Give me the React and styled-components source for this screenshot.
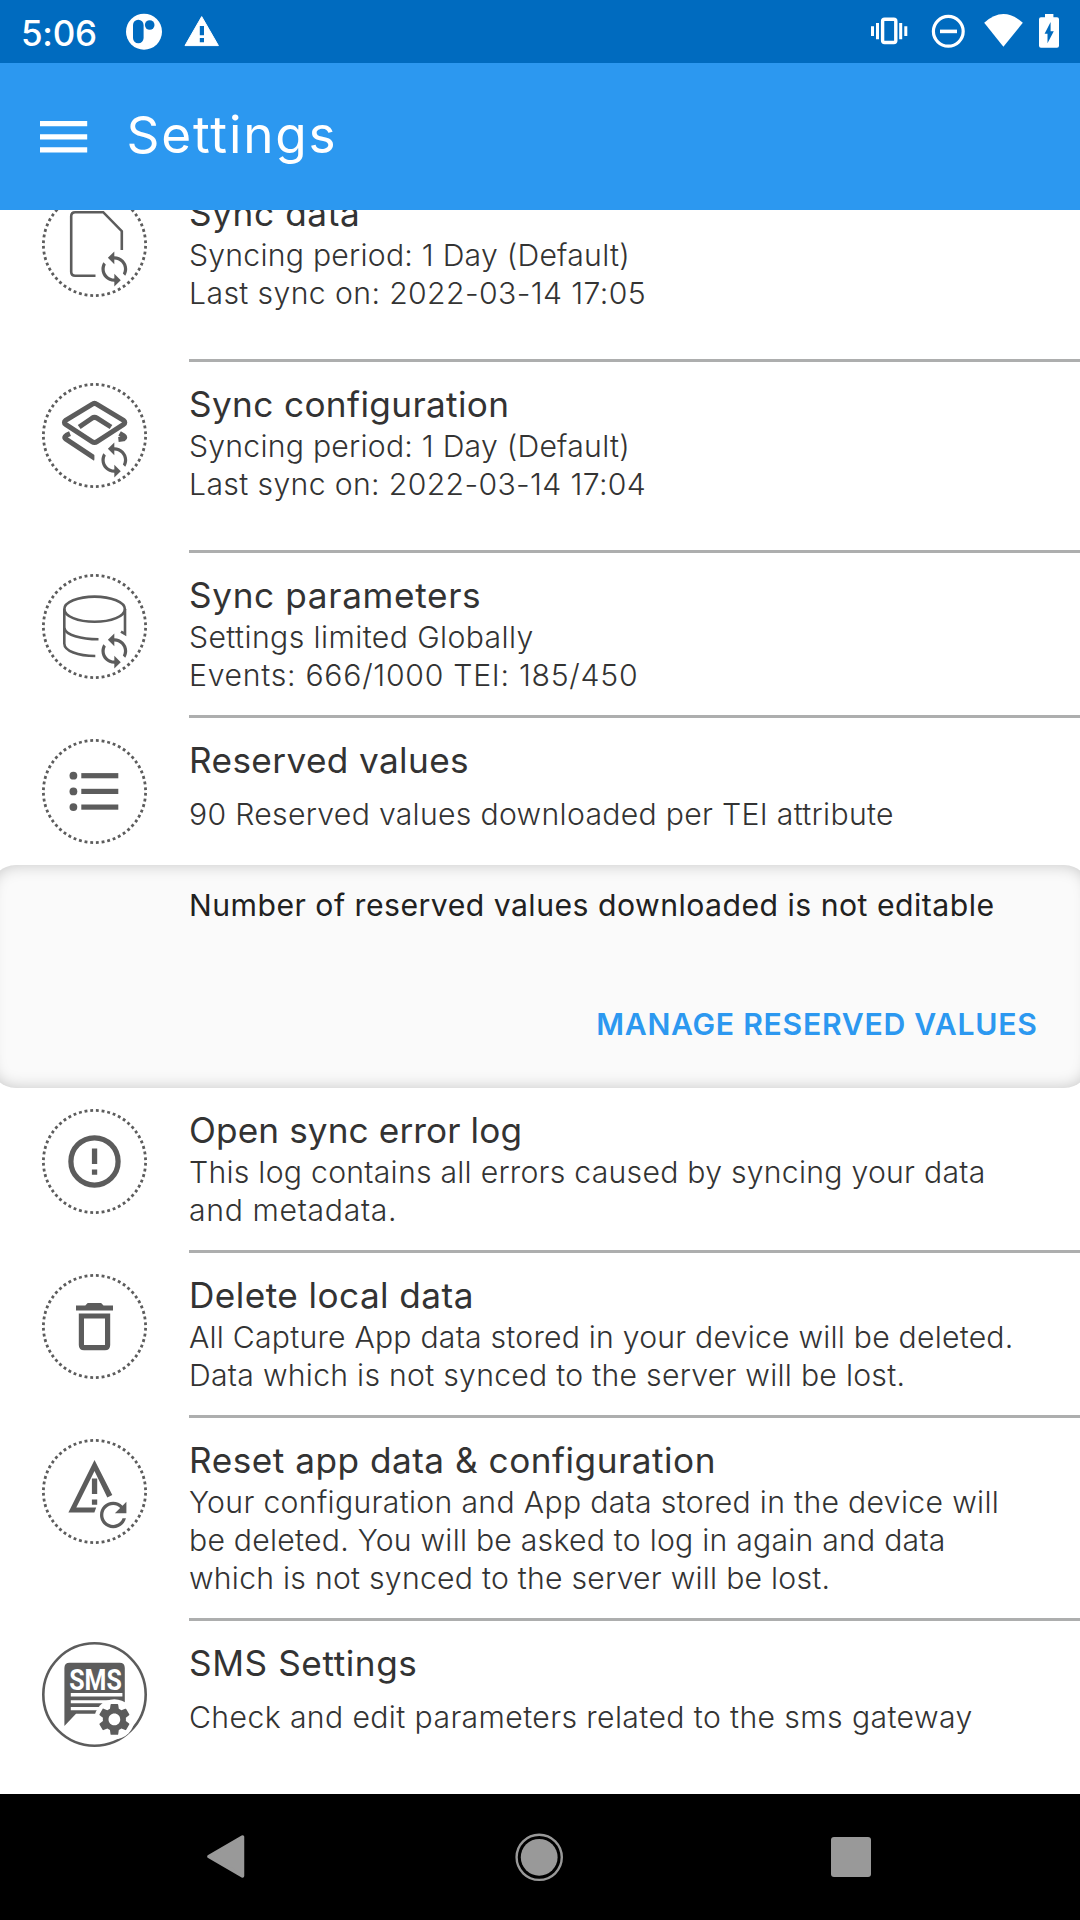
import React from "react";
import styled, { createGlobalStyle } from "styled-components";

const INK = "#5c5c5c";

const GlobalStyle = createGlobalStyle`
  *, *::before, *::after { box-sizing: border-box; }
  body { margin: 0; background: #fff; }
  svg { display: block; flex: none; }
`;

const Screen = styled.div`
  display: flex;
  flex-direction: column;
  width: 1080px;
  height: 1920px;
  overflow: hidden;
  background: #fff;
  font-family: Inter, Roboto, "Liberation Sans", sans-serif;
`;

const StatusBar = styled.header`
  display: flex;
  flex: none;
  align-items: stretch;
  justify-content: space-between;
  height: 63px;
  padding: 0 21px;
  background: #006bbf;
  color: #fff;
`;

const StatusGroup = styled.div`
  display: flex;
`;

const Clock = styled.time`
  width: 105px;
  font-size: 35px;
  font-weight: 500;
  line-height: 67px;
  letter-spacing: -0.3px;
`;

const StatusIcon = styled.svg`
  height: 63px;
  margin-right: ${(p) => p.$gap || 0}px;
`;

const AppBar = styled.div`
  display: flex;
  flex: none;
  align-items: center;
  height: 147px;
  padding-left: 40px;
  background: #2c98f0;
  color: #fff;
`;

const MenuButton = styled.button`
  display: flex;
  padding: 0;
  border: 0;
  background: none;
  margin-right: 38.6px;
`;

const AppTitle = styled.h1`
  margin: 0;
  padding-bottom: 5px;
  font-size: 51.3px;
  font-weight: 400;
  line-height: 62px;
  letter-spacing: 1.8px;
`;

const Content = styled.main`
  flex: 1;
  min-height: 0;
  overflow: hidden;
`;

const List = styled.div`
  display: flex;
  flex-direction: column;
  margin-top: -39px;
`;

const Row = styled.section`
  display: flex;
  flex: none;
  height: ${(p) => p.$height}px;
  padding-left: 42px;
`;

const RowIcon = styled.svg`
  width: 105px;
  height: 105px;
  margin: 21px 42px 0 0;
  overflow: visible;
`;

const RowBody = styled.div`
  flex: 1;
  padding-top: 21px;
  border-bottom: ${(p) => (p.$divided ? "3px solid #adaeae" : "0")};
`;

const RowTitle = styled.h2`
  margin: 0;
  color: #333;
  font-size: 35.2px;
  font-weight: 400;
  line-height: 42px;
  letter-spacing: ${(p) => p.$track}px;
  white-space: nowrap;
`;

const Description = styled.div`
  padding-top: ${(p) => (p.$spaced ? 14 : 2)}px;
`;

const Line = styled.p`
  margin: 0;
  color: #333;
  font-size: 30.2px;
  font-weight: 300;
  line-height: 38px;
  letter-spacing: ${(p) => p.$track}px;
  white-space: nowrap;
`;

const Panel = styled.section`
  flex: none;
  height: 223px;
  margin: 0 -10px;
  padding: 21px 52.5px 0 199px;
  border-radius: 26px;
  background: #fafafa;
  box-shadow: inset 0 0 16px rgba(0, 0, 0, 0.21);
`;

const Notice = styled.p`
  margin: 0;
  color: #212121;
  font-size: 30.2px;
  font-weight: 400;
  line-height: 38px;
  letter-spacing: 0.48px;
  white-space: nowrap;
`;

const TextButton = styled.button`
  display: block;
  margin: 81px 0 0 auto;
  padding: 0;
  border: 0;
  background: none;
  color: #2c98f0;
  font: 600 30.2px/38px Inter, Roboto, "Liberation Sans", sans-serif;
  letter-spacing: 0.72px;
  white-space: nowrap;
`;

const NavBar = styled.nav`
  display: flex;
  flex: none;
  align-items: center;
  justify-content: space-between;
  height: 126px;
  padding: 0 209px 0 207px;
  background: #000;
`;

const DottedRing = () => (
  <circle cx="52.5" cy="52.5" r="51.1" fill="none" stroke={INK} strokeWidth="2.8"
    pathLength="336" strokeDasharray="3 3" strokeDashoffset="-1.5" />
);

const SyncArrows = () => (
  <path
    transform="translate(53 57.8) scale(1.61 1.6)"
    fill={INK}
    d="M12 4V1L8 5l4 4V6c3.31 0 6 2.69 6 6 0 1.01-.25 1.97-.7 2.8l1.46 1.46C19.54 15.03 20 13.57 20 12c0-4.42-3.58-8-8-8zM12 18c-3.31 0-6-2.69-6-6 0-1.01.25-1.97.7-2.8L5.24 7.74C4.46 8.97 4 10.43 4 12c0 4.42 3.58 8 8 8v3l4-4-4-4v3z"
  />
);

const glyphs = {
  data: (
    <>
      <path d="M53.5 83.7H33.2q-4 0-4-4V24.2q0-4 4-4h28l18.6 19V58" fill="none" stroke={INK} strokeWidth="2.6" />
      <SyncArrows />
    </>
  ),
  config: (
    <>
      <g fill="none" stroke={INK} strokeWidth="5" strokeLinejoin="round">
        <path d="M50 21.4Q52.5 19.4 55 21.4L81.6 37.4Q84 39.4 81.6 41.4L55 58.6Q52.5 60.4 50 58.6L23.6 41.4Q21.2 39.4 23.6 37.4Z" />
        <path d="M37.2 44L50 35.2Q52.5 33.6 55 35.2L69 44" />
        <path d="M28 50.6Q20.4 53.6 24 56.2L53.4 75.6" />
        <path d="M77.6 50.4L81.4 52.6Q84 54.4 81.6 55.8L76.4 56.4" />
      </g>
      <path d="M52.4 70h6v10h-6z" fill="#fff" />
      <SyncArrows />
    </>
  ),
  database: (
    <>
      <g fill="none" stroke={INK} strokeWidth="2.6">
        <ellipse cx="52.6" cy="35.2" rx="30.3" ry="12.6" />
        <path d="M22.3 35V69.5C22.3 77 36 82 53.3 82" />
        <path d="M22.3 54C23.5 61 39 65.3 56.5 65.3" />
        <path d="M83 35V60L79 57.6" />
      </g>
      <SyncArrows />
    </>
  ),
  list: (
    <g fill={INK}>
      {[36.7, 52.4, 68.1].map((y) => (
        <g key={y}>
          <circle cx="31.4" cy={y} r="3.9" />
          <rect x="39.3" y={y - 2.6} width="37" height="5.2" />
        </g>
      ))}
    </g>
  ),
  error: (
    <>
      <circle cx="52.5" cy="52.4" r="23.6" fill="none" stroke={INK} strokeWidth="5.25" />
      <path d="M49.9 39.4h5.3v15.7h-5.3zM49.9 60.4h5.3v5.3h-5.3z" fill={INK} />
    </>
  ),
  trash: (
    <g fill={INK}>
      <path d="M34 31.4h9.3l2.4-2.4h13.4l2.4 2.4H71v5.2H34z" />
      <path fillRule="evenodd" d="M36.8 39.4h31.4V71q0 5.3-5.3 5.3H42.1q-5.3 0-5.3-5.3zM42 44.6V71h21V44.6z" />
    </g>
  ),
  reset: (
    <g fill={INK}>
      <path d="M52.5 21L70.3 56L65.3 58.4L52.5 32L34.3 68.6H54.2L52.4 73.4H26.4z" />
      <path d="M49.9 39.4h5.3v15.7h-5.3zM49.9 60.4h5.3v5.3h-5.3z" />
      <path
        transform="translate(51.4 56.2) scale(1.65)"
        d="M17.65 6.35C16.2 4.9 14.21 4 12 4c-4.42 0-7.99 3.58-7.99 8s3.57 8 7.99 8c3.73 0 6.84-2.55 7.73-6h-2.08c-.82 2.33-3.04 4-5.65 4-3.31 0-6-2.69-6-6s2.69-6 6-6c1.66 0 3.14.69 4.22 1.78L13 11h7V4l-2.35 2.35z"
      />
    </g>
  ),
  sms: (
    <>
      <path d="M27.6 20.7h50q5.2 0 5.2 5.2v45.8H34L22.4 84V25.9q0-5.2 5.2-5.2z" fill={INK} />
      <path d="M28.8 51h51.6v3.6H28.8zM28.8 58.2h40v3.1h-40zM28.8 65h30v3.2h-30z" fill="#fff" />
      <text x="27.2" y="48.2" textLength="52.6" lengthAdjust="spacingAndGlyphs" fill="#fff"
        fontFamily="Roboto, sans-serif" fontWeight="700" fontSize="28.8">SMS</text>
      <circle cx="72.3" cy="77.3" r="20" fill="#fff" />
      <path
        transform="translate(53.9 58.9) scale(1.54)"
        fill={INK}
        d="M19.43 12.98c.04-.32.07-.64.07-.98s-.03-.66-.07-.98l2.11-1.65c.19-.15.24-.42.12-.64l-2-3.46c-.12-.22-.39-.3-.61-.22l-2.49 1c-.52-.4-1.08-.73-1.69-.98l-.38-2.65C14.46 2.18 14.25 2 14 2h-4c-.25 0-.46.18-.49.42l-.38 2.65c-.61.25-1.17.59-1.69.98l-2.49-1c-.23-.09-.49 0-.61.22l-2 3.46c-.13.22-.07.49.12.64l2.11 1.65c-.04.32-.07.65-.07.98s.03.66.07.98l-2.11 1.65c-.19.15-.24.42-.12.64l2 3.46c.12.22.39.3.61.22l2.49-1c.52.4 1.08.73 1.69.98l.38 2.65c.03.24.24.42.49.42h4c.25 0 .46-.18.49-.42l.38-2.65c.61-.25 1.17-.59 1.69-.98l2.49 1c.23.09.49 0 .61-.22l2-3.46c.12-.22.07-.49-.12-.64l-2.11-1.65zM12 15.8c-2.1 0-3.8-1.7-3.8-3.8s1.7-3.8 3.8-3.8 3.8 1.7 3.8 3.8-1.7 3.8-3.8 3.8z"
      />
    </>
  ),
};

const syncRows = [
  {
    icon: "data", height: 191, divided: true, title: "Sync data", track: 0.6,
    lines: [["Syncing period: 1 Day (Default)", 0.24], ["Last sync on: 2022-03-14 17:05", 0.38]],
  },
  {
    icon: "config", height: 191, divided: true, title: "Sync configuration", track: 0.36,
    lines: [["Syncing period: 1 Day (Default)", 0.24], ["Last sync on: 2022-03-14 17:04", 0.35]],
  },
  {
    icon: "database", height: 165, divided: true, title: "Sync parameters", track: 0.64,
    lines: [["Settings limited Globally", 0.4], ["Events: 666/1000 TEI: 185/450", 0.72]],
  },
  {
    icon: "list", height: 147, title: "Reserved values", track: 0.38, spaced: true,
    lines: [["90 Reserved values downloaded per TEI attribute", 0.3]],
  },
];

const maintenanceRows = [
  {
    icon: "error", height: 165, divided: true, title: "Open sync error log", track: 0.1,
    lines: [["This log contains all errors caused by syncing your data", 0.255], ["and metadata.", 0.65]],
  },
  {
    icon: "trash", height: 165, divided: true, title: "Delete local data", track: 0.43,
    lines: [
      ["All Capture App data stored in your device will be deleted.", 0.22],
      ["Data which is not synced to the server will be lost.", 0.268],
    ],
  },
  {
    icon: "reset", height: 203, divided: true, title: "Reset app data & configuration", track: 0.5,
    lines: [
      ["Your configuration and App data stored in the device will", 0.32],
      ["be deleted. You will be asked to log in again and data", 0.235],
      ["which is not synced to the server will be lost.", 0.245],
    ],
  },
  {
    icon: "sms", height: 173, title: "SMS Settings", track: 0.58, spaced: true, solidRing: true,
    lines: [["Check and edit parameters related to the sms gateway", 0.385]],
  },
];

const SettingRow = ({ icon, height, divided, title, track, spaced, solidRing, lines }) => (
  <Row $height={height}>
    <RowIcon viewBox="0 0 105 105">
      {solidRing ? (
        <circle cx="52.5" cy="52.5" r="51.2" fill="none" stroke={INK} strokeWidth="2.6" />
      ) : (
        <DottedRing />
      )}
      {glyphs[icon]}
    </RowIcon>
    <RowBody $divided={divided}>
      <RowTitle $track={track}>{title}</RowTitle>
      <Description $spaced={spaced}>
        {lines.map(([text, spacing]) => (
          <Line key={text} $track={spacing}>{text}</Line>
        ))}
      </Description>
    </RowBody>
  </Row>
);

export default function App() {
  return (
    <Screen>
      <GlobalStyle />
      <StatusBar>
        <StatusGroup>
          <Clock>5:06</Clock>
          <StatusIcon width="36" viewBox="126 0 36 63" $gap={22}>
            <circle cx="144" cy="31.7" r="18" fill="#fff" />
            <rect x="133" y="19.7" width="10.6" height="23.6" rx="5.2" fill="#006bbf" />
            <circle cx="149.7" cy="25" r="4.8" fill="#006bbf" />
          </StatusIcon>
          <StatusIcon width="36" viewBox="184 0 36 63">
            <path d="M201.7 16.6L218.4 45.6H185z" fill="#fff" stroke="#fff" strokeWidth="1" strokeLinejoin="round" />
            <path d="M199.8 26h4.2v9.3h-4.2zM199.8 38h4.2v4.2h-4.2z" fill="#006bbf" />
          </StatusIcon>
        </StatusGroup>
        <StatusGroup>
          <StatusIcon width="38" viewBox="870 0 38 63" $gap={23}>
            <rect x="882.6" y="19.3" width="13.2" height="23.2" rx="2" fill="none" stroke="#fff" strokeWidth="3.4" />
            <path d="M871 26.3h3v9.7h-3zM876 23h3v16.3h-3zM899.2 23h3v16.3h-3zM904.3 26.3h3v9.7h-3z" fill="#fff" />
          </StatusIcon>
          <StatusIcon width="34" viewBox="931 0 34 63" $gap={19}>
            <circle cx="948.3" cy="31.3" r="14.9" fill="none" stroke="#fff" strokeWidth="3.2" />
            <path d="M940 29.6h17v3.6h-17z" fill="#fff" />
          </StatusIcon>
          <StatusIcon width="39" viewBox="984 0 39 63" $gap={16}>
            <path d="M984.2 22.8Q1003.4 5.4 1022.8 22.8L1003.4 46.8z" fill="#fff" />
          </StatusIcon>
          <StatusIcon width="20" viewBox="1039 0 20 63">
            <path d="M1045 14h8.4v3.2h3.6q2 0 2 2v26.6q0 2-2 2h-16q-2 0-2-2V19.2q0-2 2-2h4z" fill="#fff" />
            <path d="M1050.6 22L1044.6 33.8H1047.5V43.3L1053.8 31.3H1050.6z" fill="#006bbf" />
          </StatusIcon>
        </StatusGroup>
      </StatusBar>

      <AppBar>
        <MenuButton aria-label="Menu">
          <svg width="48" height="32" viewBox="0 0 48 32" fill="#fff">
            <path d="M0 0h47.2v5.3H0zM0 13.2h47.2v5.3H0zM0 26.3h47.2v5.3H0z" />
          </svg>
        </MenuButton>
        <AppTitle>Settings</AppTitle>
      </AppBar>

      <Content>
        <List>
          {syncRows.map((row) => <SettingRow key={row.title} {...row} />)}
          <Panel>
            <Notice>Number of reserved values downloaded is not editable</Notice>
            <TextButton>MANAGE RESERVED VALUES</TextButton>
          </Panel>
          {maintenanceRows.map((row) => <SettingRow key={row.title} {...row} />)}
        </List>
      </Content>

      <NavBar>
        <svg width="38" height="44" viewBox="0 0 38 44">
          <path d="M2 21.5L35.5 2V41z" fill="#999" stroke="#999" strokeWidth="3.5" strokeLinejoin="round" />
        </svg>
        <svg width="49" height="49" viewBox="0 0 49 49">
          <circle cx="25.2" cy="24.3" r="22.6" fill="none" stroke="#999" strokeWidth="2.4" />
          <circle cx="25.2" cy="24.3" r="18.4" fill="#999" />
        </svg>
        <svg width="40" height="40" viewBox="0 0 40 40">
          <rect width="40" height="40" rx="3" fill="#999" />
        </svg>
      </NavBar>
    </Screen>
  );
}
